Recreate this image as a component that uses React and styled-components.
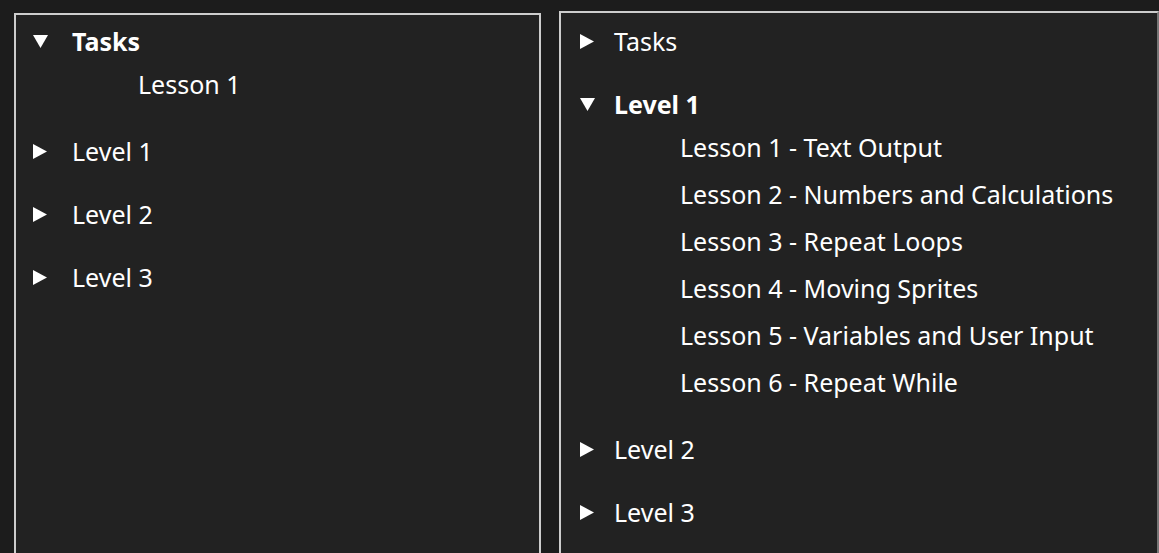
import styled, { createGlobalStyle } from "styled-components";

const GlobalStyle = createGlobalStyle`
  html, body {
    margin: 0;
    padding: 0;
    background: #1c1c1c;
    overflow: hidden;
  }
`;

const levels = {
  level1: [
    "Lesson 1 - Text Output",
    "Lesson 2 - Numbers and Calculations",
    "Lesson 3 - Repeat Loops",
    "Lesson 4 - Moving Sprites",
    "Lesson 5 - Variables and User Input",
    "Lesson 6 - Repeat While",
  ],
};

const leftTree = [
  { title: "Tasks", open: true, items: ["Lesson 1"] },
  { title: "Level 1" },
  { title: "Level 2" },
  { title: "Level 3" },
];

const rightTree = [
  { title: "Tasks" },
  { title: "Level 1", open: true, items: levels.level1 },
  { title: "Level 2" },
  { title: "Level 3" },
];

const Caret = ({ open }) =>
  open ? (
    <svg width="15" height="13" viewBox="0 0 15 13">
      <path d="M0 0 H15 L7.5 13 Z" fill="#fff" />
    </svg>
  ) : (
    <svg width="14" height="15" viewBox="0 0 14 15">
      <path d="M0 0 L14 7.5 L0 15 Z" fill="#fff" />
    </svg>
  );

const TreeView = ({ nodes, gap }) => (
  <List>
    {nodes.map((node) => (
      <Node key={node.title}>
        <Summary $gap={gap}>
          <CaretBox>
            <Caret open={node.open} />
          </CaretBox>
          <Label $bold={node.open}>{node.title}</Label>
        </Summary>
        {node.open && (
          <Children $indent={gap + 66}>
            {node.items.map((item) => (
              <Leaf key={item}>{item}</Leaf>
            ))}
          </Children>
        )}
      </Node>
    ))}
  </List>
);

export default function App() {
  return (
    <>
      <GlobalStyle />
      <Page>
        <LeftPanel>
          <TreeView nodes={leftTree} gap={39} />
        </LeftPanel>
        <RightPanel>
          <TreeView nodes={rightTree} gap={34} />
        </RightPanel>
      </Page>
    </>
  );
}

const Page = styled.div`
  display: flex;
  align-items: flex-start;
  gap: 18px;
  padding: 11px 0 0 14px;
  height: 553px;
  box-sizing: border-box;
  font-family: "Noto Sans", "Open Sans", sans-serif;
  color: #fff;
`;

const Panel = styled.div`
  box-sizing: border-box;
  height: 560px;
  background: #222222;
  border: 2px solid #cdcdcd;
  flex-shrink: 0;
`;

const LeftPanel = styled(Panel)`
  width: 527px;
  margin-top: 2px;
  padding: 6px 0 0 17px;
`;

const RightPanel = styled(Panel)`
  width: 600px;
  border-right-color: #777;
  padding: 8px 0 0 19px;
`;

const List = styled.ul`
  list-style: none;
  margin: 0;
  padding: 0;
`;

const Node = styled.li`
  margin-bottom: 23px;
`;

const Summary = styled.div`
  display: grid;
  grid-template-columns: ${(p) => p.$gap}px auto;
  align-items: center;
  height: 40px;
`;

const CaretBox = styled.span`
  display: flex;
  align-items: center;
`;

const Label = styled.span`
  font-size: 25px;
  line-height: 40px;
  font-weight: ${(p) => (p.$bold ? 700 : 400)};
`;

const Children = styled.ul`
  list-style: none;
  margin: 0;
  padding: 0 0 0 ${(p) => p.$indent}px;
`;

const Leaf = styled.li`
  height: 47px;
  line-height: 46px;
  font-size: 25px;
`;
